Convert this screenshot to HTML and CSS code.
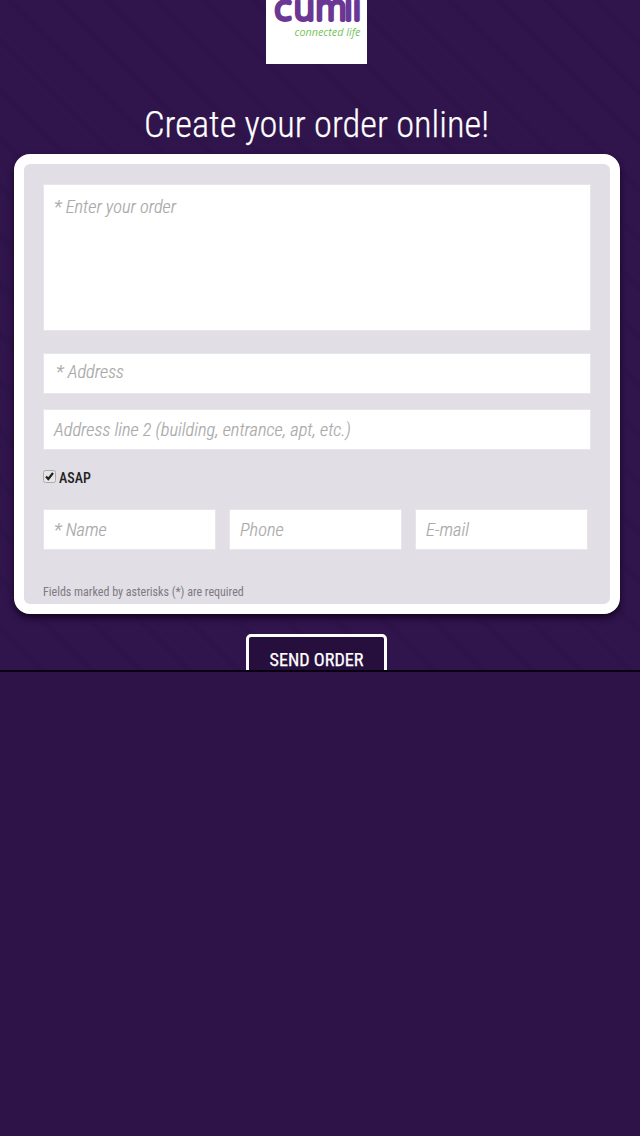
FILE: index.html
```html
<!DOCTYPE html>
<html lang="en">
<head>
<meta charset="utf-8">
<title>Create your order online!</title>
<link rel="stylesheet" href="styles.css">
</head>
<body>
<main class="order-page">
  <svg class="logo" viewBox="0 0 101 64" role="img" aria-label="cumii connected life">
    <rect width="101" height="64" fill="#fff"/>
    <text class="logo-name" x="8.5 28 49.5 78.5 87" y="19.6">cumii</text>
    <text class="logo-tag" x="28.5" y="35.5" textLength="66" lengthAdjust="spacingAndGlyphs">connected life</text>
  </svg>
  <h1 class="title">Create your order online!</h1>
  <form class="panel">
    <div class="field field-order">* Enter your order</div>
    <div class="field field-address">* Address</div>
    <div class="field field-address2">Address line 2 (building, entrance, apt, etc.)</div>
    <div class="asap">
      <svg class="check" viewBox="0 0 13 13"><rect x=".5" y=".5" width="12" height="12" rx="2" fill="#e6e6e6" stroke="#aaa"/><path d="M3 6.5 5.3 9 10 3" fill="none" stroke="#222" stroke-width="2.2"/></svg>
      <span>ASAP</span>
    </div>
    <div class="contacts">
      <div class="field">* Name</div>
      <div class="field">Phone</div>
      <div class="field">E-mail</div>
    </div>
    <p class="note">Fields marked by asterisks (*) are required</p>
  </form>
  <div class="send">SEND ORDER</div>
</main>
</body>
</html>
```

FILE: styles.css
```css
* { box-sizing: border-box; }
body {
  margin: 0;
  min-height: 1136px;
  background: #2e1348;
  font-family: "Roboto Condensed", Roboto, sans-serif;
  font-stretch: 75%;
}
.order-page {
  height: 672px;
  overflow: hidden;
  padding: 0 21px 0 14px;
  display: flex;
  flex-direction: column;
  align-items: center;
  border-bottom: 2px solid #080010;
  background: repeating-linear-gradient(45deg, #30144c 0 26px, #2e1349 29px 31px, #30144c 34.6px);
}
.logo { width: 101px; height: 64px; flex: none; display: block; overflow: hidden; }
.logo-name { font: 300 35px "Open Sans", sans-serif; fill: #6b3795; stroke: #6b3795; stroke-width: 3.8; stroke-linejoin: round; }
.logo-tag { font: italic 10.5px "Open Sans", sans-serif; fill: #77c45e; }
.title {
  margin: 38px 0 0;
  height: 52px;
  flex: none;
  line-height: 45px;
  font-size: 36.4px;
  font-weight: 300;
  -webkit-text-stroke: 0.25px #fff;
  color: #fff;
  white-space: nowrap;
}
.panel {
  width: 606px;
  height: 460px;
  flex: none;
  align-self: flex-start;
  padding: 20px 19px 0 19px;
  border: 10px solid #fff;
  border-radius: 16px;
  background: #e1dee5;
  box-shadow: 0 4px 6px #160525;
}
.field {
  height: 41px;
  padding: 0 10px;
  border: 1px solid #e8e6eb;
  background: #fff;
  color: #aaa;
  font-size: 18.35px;
  font-style: italic;
  font-weight: 300;
  -webkit-text-stroke: 0.2px #aaa;
  line-height: 40px;
  white-space: nowrap;
}
.field-order { height: 147px; line-height: 44px; }
.field-address { margin-top: 22px; padding-left: 12px; line-height: 35px; }
.field-address2 { margin-top: 15px; }
.asap { display: flex; align-items: center; gap: 3px; height: 20px; margin-top: 18px; font-size: 14px; font-weight: 500; color: #222; }
.check { width: 13px; height: 13px; margin-top: -4px; }
.contacts { display: grid; grid-template-columns: repeat(3, 173px); gap: 13px; margin-top: 21px; }
.note { margin: 34px 0 0; font-size: 12px; line-height: 16px; color: #7d7a82; white-space: nowrap; }
.send {
  width: 141px;
  height: 50px;
  flex: none;
  margin-top: 20px;
  border: 3px solid #fff;
  border-radius: 5px;
  background: #260f3c;
  color: #fff;
  font-size: 18.2px;
  -webkit-text-stroke: 0.25px #fff;
  line-height: 45px;
  text-align: center;
}
```
